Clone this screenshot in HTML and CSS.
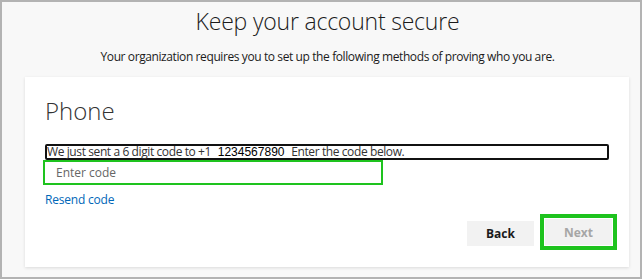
FILE: index.html
```html
<!DOCTYPE html>
<html lang="en">
  <head>
    <meta charset="UTF-8" />
    <meta name="viewport" content="width=device-width, initial-scale=1.0" />
    <title>Keep your account secure</title>
    <link rel="stylesheet" href="styles.css">
  </head>
  <body>
    <div class="frame">
      <h1 class="title">Keep your account secure</h1>
      <p class="intro">Your organization requires you to set up the following methods of proving who you are.</p>

      <!-- PHONE STEP -->
      <div class="card">
        <h2 class="method">Phone</h2>
        <div class="notice">We just sent a 6 digit code to +1 <span class="number">1234567890</span> Enter the code below.</div>
        <input class="code" type="text" placeholder="Enter code" />
        <a class="resend" href="#">Resend code</a>
        <div class="actions">
          <button class="btn back">Back</button>
          <button class="btn next" disabled>Next</button>
        </div>
      </div>
    </div>
  </body>
</html>
```

FILE: styles.css
```css
:root {
  --bg: #f8f8f8;
  --panel: #ffffff;
  --link: #0067b8;
  --green: #1ec31e;
  --btn: #f2f2f2;
}

* {
  box-sizing: border-box;
  font-family: "Open Sans", sans-serif;
}

body {
  margin: 0;
  background: #fff;
}

.frame {
  width: 642px;
  height: 279px;
  border: 2px solid #b3b3b3;
  background: var(--bg);
  padding: 3px 10px 0 23px;
}

.title {
  margin: 0;
  font-size: 23px;
  font-weight: 300;
  line-height: 32px;
  letter-spacing: -0.2px;
  color: #1b1b1b;
  text-align: center;
}

.intro {
  margin: 12px 0 0;
  font-size: 12px;
  line-height: 16px;
  letter-spacing: -0.4px;
  color: #1b1b1b;
  text-align: center;
}

/* ───── CARD ───── */
.card {
  margin-top: 12px;
  width: 604px;
  height: 190px;
  background: var(--panel);
  box-shadow: 0 1px 3px rgba(0, 0, 0, 0.12);
  padding: 18px 17px 0 20px;
  display: flex;
  flex-direction: column;
  align-items: flex-start;
}

.method {
  margin: 0;
  font-size: 24px;
  font-weight: 300;
  line-height: 32px;
  color: #333;
}

.notice {
  margin-top: 17px;
  width: 564px;
  height: 16px;
  border: 2px solid #111;
  border-radius: 2px;
  font-size: 12px;
  line-height: 12px;
  letter-spacing: -0.4px;
  color: #333;
  white-space: nowrap;
}

.notice .number {
  font-family: "Liberation Sans", sans-serif;
  letter-spacing: 0;
  color: #000;
  margin: 0 4px;
}

.code {
  margin-left: -2px;
  width: 340px;
  height: 25px;
  border: 2px solid var(--green);
  padding: 0 11px;
  font-size: 12px;
  color: #333;
  outline: none;
}

.code::placeholder { color: #666; }

.resend {
  margin-top: 8px;
  font-size: 12px;
  line-height: 14px;
  letter-spacing: -0.2px;
  color: var(--link);
  text-decoration: none;
}

.actions {
  align-self: stretch;
  display: flex;
  justify-content: flex-end;
  align-items: flex-start;
  gap: 11px;
  margin-top: 12px;
}

.btn {
  width: 67px;
  height: 25px;
  border: none;
  background: var(--btn);
  font-size: 12px;
  font-weight: 700;
  color: #1b1b1b;
  padding: 0;
}

.back { margin-top: 2px; }

.next {
  height: 26px;
  color: #a6a6a6;
  outline: 4px solid var(--green);
  outline-offset: 1px;
}
```
